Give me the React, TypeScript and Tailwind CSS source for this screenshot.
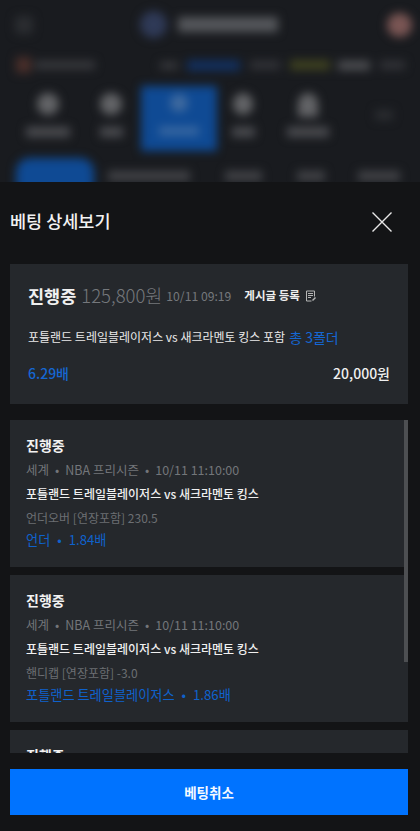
import React from 'react';

const bets = [
  {
    id: 1,
    market: '언더오버 [연장포함] 230.5',
    pick: '언더',
    odds: '1.84배',
  },
  {
    id: 2,
    market: '핸디캡 [연장포함] -3.0',
    pick: '포틀랜드 트레일블레이저스',
    odds: '1.86배',
  },
];

const BlurredNav = () => (
  <div className="h-[182px] shrink-0 overflow-hidden bg-[#191b1f]">
    <div className="blur-[5px]">
      {/* top bar */}
      <div className="flex h-[49px] items-center pl-[15px]">
        <div className="h-[18px] w-[18px] rounded-sm bg-[#2b2d31]" />
        <div className="ml-[107px] h-[27px] w-[27px] rounded-full bg-[#2f3a57]" />
        <div className="ml-[11px] h-[15px] w-[100px] bg-[#55575b]" />
        <div className="ml-[109px] h-[24px] w-[25px] rounded-full bg-[#7a5654]" />
      </div>
      {/* notice row */}
      <div className="flex h-[32px] items-center pl-[16px]">
        <div className="h-[16px] w-[15px] bg-[#4a2f2a]" />
        <div className="ml-[4px] h-[8px] w-[60px] bg-[#3a3b3f]" />
        <div className="ml-[65px] h-[7px] w-[18px] bg-[#3a3b3f]" />
        <div className="ml-[9px] h-[11px] w-[53px] bg-[#12305f]" />
        <div className="ml-[10px] h-[8px] w-[30px] bg-[#34353a]" />
        <div className="ml-[10px] h-[10px] w-[40px] bg-[#3f4220]" />
        <div className="ml-[8px] h-[9px] w-[32px] bg-[#505155]" />
        <div className="ml-[10px] h-[8px] w-[25px] bg-[#34353a]" />
      </div>
      {/* category tabs */}
      <div className="flex h-[70px] items-stretch pl-[15px] pt-[5px]">
        <div className="flex w-[66px] flex-col items-center pt-[7px]">
          <div className="h-[22px] w-[22px] rounded-full bg-[#636467]" />
          <div className="mt-[12px] h-[10px] w-[44px] bg-[#4c4d51]" />
        </div>
        <div className="flex w-[60px] flex-col items-center pt-[7px]">
          <div className="h-[22px] w-[22px] rounded-full bg-[#636467]" />
          <div className="mt-[12px] h-[10px] w-[23px] bg-[#4c4d51]" />
        </div>
        <div className="flex w-[76px] flex-col items-center bg-[#0f4a94] pt-[8px]">
          <div className="h-[18px] w-[18px] rounded-full bg-[#3f6a9f]" />
          <div className="mt-[15px] h-[8px] w-[40px] bg-[#3c6aa2]" />
        </div>
        <div className="flex w-[52px] flex-col items-center pt-[7px]">
          <div className="h-[22px] w-[20px] rounded-full bg-[#636467]" />
          <div className="mt-[12px] h-[10px] w-[23px] bg-[#4c4d51]" />
        </div>
        <div className="flex w-[78px] flex-col items-center pt-[7px]">
          <div className="h-[24px] w-[20px] rounded-t-full bg-[#636467]" />
          <div className="mt-[10px] h-[10px] w-[42px] bg-[#4c4d51]" />
        </div>
        <div className="ml-[28px] mt-[24px] h-[10px] w-[18px] bg-[#2b2d31]" />
      </div>
      {/* sub tabs */}
      <div className="flex h-[31px] items-start pl-[16px] pt-[7px]">
        <div className="h-[40px] w-[78px] rounded-[14px] bg-[#0f4a94]" />
        <div className="ml-[14px] mt-[13px] h-[10px] w-[82px] bg-[#434448]" />
        <div className="ml-[35px] mt-[13px] h-[10px] w-[37px] bg-[#434448]" />
        <div className="ml-[35px] mt-[13px] h-[10px] w-[28px] bg-[#434448]" />
        <div className="ml-[33px] mt-[13px] h-[10px] w-[42px] bg-[#434448]" />
      </div>
    </div>
  </div>
);

const BetCard = ({ market, pick, odds }: { market: string; pick: string; odds: string }) => (
  <div className="h-[147px] shrink-0 bg-[#25282c] pl-[16px] pt-[14px]">
    <div className="text-[14px] font-bold leading-[22px] text-[#f2f2f2]">진행중</div>
    <div className="mt-[3px] flex h-[22px] items-center text-[12.5px] text-[#73767a]">
      <span>세계</span>
      <span className="mx-[6px]">•</span>
      <span>NBA 프리시즌</span>
      <span className="mx-[6px]">•</span>
      <span>10/11 11:10:00</span>
    </div>
    <div className="mt-[2px] text-[12px] font-medium leading-[22px] text-[#f0f0f0]">
      포틀랜드 트레일블레이저스 vs 새크라멘토 킹스
    </div>
    <div className="mt-[2px] text-[12px] leading-[22px] text-[#6c6f73]">{market}</div>
    <div className="flex h-[21px] items-center text-[13.2px] text-[#0f62cc]">
      <span>{pick}</span>
      <span className="mx-[7px]">•</span>
      <span>{odds}</span>
    </div>
  </div>
);

export default function App() {
  return (
    <div className="flex h-[831px] w-[420px] flex-col overflow-hidden bg-[#131416] font-['Noto_Sans_CJK_KR','Noto_Sans',sans-serif]">
      <BlurredNav />

      <div className="flex min-h-0 flex-1 flex-col pl-[10px] pr-[12px]">
        {/* title */}
        <div className="flex h-[82px] shrink-0 items-center justify-between pb-[3px]">
          <h1 className="text-[17.5px] font-medium text-[#f2f2f2]">베팅 상세보기</h1>
          <svg className="mr-[16px] h-[20px] w-[20px] text-[#e8e8e8]" viewBox="0 0 20 20" fill="none" stroke="currentColor" strokeWidth="1.4">
            <path d="M0.5 0.5l19 19M19.5 0.5l-19 19" />
          </svg>
        </div>

        {/* summary */}
        <div className="h-[140px] shrink-0 bg-[#25282c] px-[18px] pt-[18px]">
          <div className="flex h-[28px] items-center">
            <span className="text-[17.5px] font-bold text-[#f0f0f0]">진행중</span>
            <span className="ml-[5px] text-[18.5px] font-light text-[#75787c]">125,800원</span>
            <span className="ml-[4px] text-[12.2px] text-[#75787c]">10/11 09:19</span>
            <span className="ml-[13px] text-[11.5px] font-bold text-[#eeeeee]">게시글 등록</span>
            <svg className="ml-[5px] h-[12px] w-[12px] text-[#b5b5b5]" viewBox="0 0 12 12" fill="none" stroke="currentColor" strokeWidth="1">
              <path d="M9.5 6.5V1H1.5v10h5" />
              <path d="M3 3.5h5M3 5.5h5M3 7.5h3" />
              <path d="M7.5 10.5l3-3" strokeWidth="1.5" />
            </svg>
          </div>
          <div className="mt-[13px] flex h-[28px] items-center">
            <span className="text-[12px] text-[#eaeaea]">포틀랜드 트레일블레이저스 vs 새크라멘토 킹스 포함</span>
            <span className="ml-[4px] text-[14px] text-[#1567d3]">총 3폴더</span>
          </div>
          <div className="mt-[8px] flex h-[28px] items-center justify-between">
            <span className="text-[14px] font-medium text-[#1567d3]">6.29배</span>
            <span className="text-[14px] font-medium text-[#efefef]">20,000원</span>
          </div>
        </div>

        {/* picks */}
        <div className="relative mt-[16px] h-[333px] shrink-0 overflow-hidden">
          <div className="flex flex-col gap-[8px]">
            {bets.map((bet) => (
              <BetCard key={bet.id} market={bet.market} pick={bet.pick} odds={bet.odds} />
            ))}
            <div className="h-[23px] shrink-0 bg-[#25282c] pl-[16px] pt-[14px]">
              <div className="text-[14px] font-bold leading-[22px] text-[#f2f2f2]">진행중</div>
            </div>
          </div>
          <div className="absolute right-0 top-0 h-[242px] w-[4px] bg-[#4d4f52]" />
        </div>

        <button className="mt-[16px] h-[46px] shrink-0 bg-[#0073ff] text-[13.5px] font-bold text-[#f5f9ff]">
          베팅취소
        </button>
      </div>
    </div>
  );
}
